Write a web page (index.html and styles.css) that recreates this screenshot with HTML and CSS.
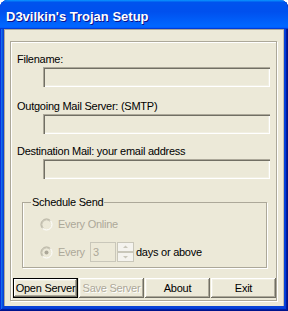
FILE: index.html
```html
<!DOCTYPE html>
<html lang="en">
<head>
    <meta charset="UTF-8">
    <title>D3vilkin's Trojan Setup</title>
    <link rel="stylesheet" href="styles.css">
</head>
<body>
    <div class="window">
        <div class="titlebar"><span class="title">D3vilkin's Trojan Setup</span></div>

        <div class="client">
            <div class="frame">
                <!-- Server settings -->
                <label class="label">Filename:</label>
                <div class="field"></div>
                <label class="label label-2">Outgoing Mail Server: (SMTP)</label>
                <div class="field"></div>
                <label class="label label-3">Destination Mail: your email address</label>
                <div class="field"></div>

                <!-- Schedule options -->
                <fieldset class="group">
                    <legend>Schedule Send</legend>
                    <div class="option">
                        <svg class="radio" width="13" height="13" viewBox="0 0 13 13">
                            <circle cx="6.5" cy="6.5" r="5" fill="#ece9d8"/>
                            <path d="M2.61 10.39A5.5 5.5 0 0 1 10.39 2.61" fill="none" stroke="#aca899"/>
                            <path d="M10.39 2.61A5.5 5.5 0 0 1 2.61 10.39" fill="none" stroke="#fff"/>
                            <path d="M3.32 9.68A4.5 4.5 0 0 1 9.68 3.32" fill="none" stroke="#c7c4b4"/>
                        </svg>
                        <span class="disabled">Every Online</span>
                    </div>
                    <div class="option option-2">
                        <svg class="radio" width="13" height="13" viewBox="0 0 13 13">
                            <circle cx="6.5" cy="6.5" r="5" fill="#ece9d8"/>
                            <path d="M2.61 10.39A5.5 5.5 0 0 1 10.39 2.61" fill="none" stroke="#aca899"/>
                            <path d="M10.39 2.61A5.5 5.5 0 0 1 2.61 10.39" fill="none" stroke="#fff"/>
                            <path d="M3.32 9.68A4.5 4.5 0 0 1 9.68 3.32" fill="none" stroke="#c7c4b4"/>
                            <circle cx="6.5" cy="6.5" r="2" fill="#aca899"/>
                        </svg>
                        <span class="disabled every">Every</span>
                        <span class="spin-input">3</span>
                        <svg class="spinner" width="17" height="20" viewBox="0 0 17 20">
                            <rect x="0.5" y="0.5" width="16" height="9" fill="#f4f3ee" stroke="#c9c7ba"/>
                            <rect x="0.5" y="10.5" width="16" height="9" fill="#f4f3ee" stroke="#c9c7ba"/>
                            <path d="M6 6h5L8.5 3.5z" fill="#c9c7ba"/>
                            <path d="M6 14h5L8.5 16.5z" fill="#c9c7ba"/>
                        </svg>
                        <span class="days">days or above</span>
                    </div>
                </fieldset>

                <!-- Actions -->
                <div class="buttons">
                    <button class="btn btn-default">Open Server</button>
                    <button class="btn" disabled>Save Server</button>
                    <button class="btn">About</button>
                    <button class="btn">Exit</button>
                </div>
            </div>
        </div>
    </div>
</body>
</html>
```

FILE: styles.css
```css
body {
    margin: 0;
    background-color: #fff;
    font-family: "Liberation Sans", Arial, sans-serif;
    font-size: 11px;
    letter-spacing: -0.25px;
    color: #000;
}

.window {
    width: 288px;
    height: 311px;
    background-color: #0842d6;
    border-radius: 8px 8px 0 0;
    display: flex;
    flex-direction: column;
    box-shadow: inset -1px -1px #00138c, inset 1px 0 #0831d9, inset -2px -2px #001ea0, inset 2px 0 #166aee, inset -3px -3px #003bda, inset 3px 0 #0855dd;
}

.titlebar {
    height: 29px;
    flex: none;
    box-sizing: border-box;
    padding: 4px 6px 0;
    border-radius: 8px 8px 0 0;
    background: linear-gradient(180deg, #0997ff, #0053ee 8%, #0050ee 40%, #06f 88%, #06f 93%, #005bff 95%, #003dd7 96%, #003dd7);
    display: flex;
    align-items: center;
}

.title {
    color: #fff;
    font-weight: bold;
    font-size: 13px;
    letter-spacing: 0;
    text-shadow: 1px 1px #0f1089;
}

.client {
    flex: 1;
    margin: 0 4px 5px;
    padding: 12px 7px 5px 6px;
    background-color: #ece9d8;
    box-shadow: inset 1px 1px #aca899, inset -1px 0 #c0bdae;
}

.frame {
    height: 260px;
    box-sizing: border-box;
    border: 1px solid #aca899;
    box-shadow: inset 1px 1px #fff, 1px 1px #fff;
    padding: 11px 0 0 2px;
    display: flex;
    flex-direction: column;
    align-items: flex-start;
}

.label {
    line-height: 13px;
    margin-left: 4px;
}

.label-2 {
    margin-top: 13px;
}

.label-3 {
    margin-top: 11px;
}

.field {
    width: 227px;
    height: 20px;
    margin: 1px 0 0 30px;
    background-color: #ece9d8;
    box-shadow: inset 1px 1px #aca899, inset 2px 2px #716f64, inset -1px -1px #fff, inset -2px -2px #f1efe2;
}

.group {
    width: 245px;
    box-sizing: border-box;
    margin: 17px 0 0 9px;
    padding: 5px 0 5px 8px;
    border: 1px solid #aca899;
    box-shadow: inset 1px 0 #fff, 1px 1px #fff;
}

.group legend {
    padding: 0 1px;
    line-height: 13px;
}

.option {
    height: 20px;
    margin-left: 9px;
    display: flex;
    align-items: center;
}

.option-2 {
    margin-top: 8px;
}

.radio {
    margin-right: 5px;
    flex: none;
}

.disabled {
    color: #aca899;
}

.every {
    width: 32px;
}

.spin-input {
    width: 26px;
    height: 20px;
    box-sizing: border-box;
    border: 1px solid #c9c7ba;
    padding-left: 2px;
    line-height: 18px;
    color: #aca899;
}

.spinner {
    margin-left: 1px;
    flex: none;
}

.days {
    margin-left: 2px;
}

.buttons {
    margin-top: 10px;
    display: flex;
    gap: 1px;
}

.btn {
    width: 65px;
    height: 20px;
    padding: 0;
    border: none;
    background-color: #ece9d8;
    font-family: "Liberation Sans", Arial, sans-serif;
    font-size: 11px;
    letter-spacing: -0.25px;
    color: #000;
    box-shadow: inset -1px -1px #716f64, inset 1px 1px #fff, inset -2px -2px #aca899, inset 2px 2px #f1efe2;
}

.btn-default {
    box-shadow: inset 0 0 0 1px #000, inset -2px -2px #716f64, inset 2px 2px #fff, inset -3px -3px #aca899, inset 3px 3px #f1efe2;
}

.btn:disabled {
    color: #aca899;
    text-shadow: 1px 1px #fff;
}
```
